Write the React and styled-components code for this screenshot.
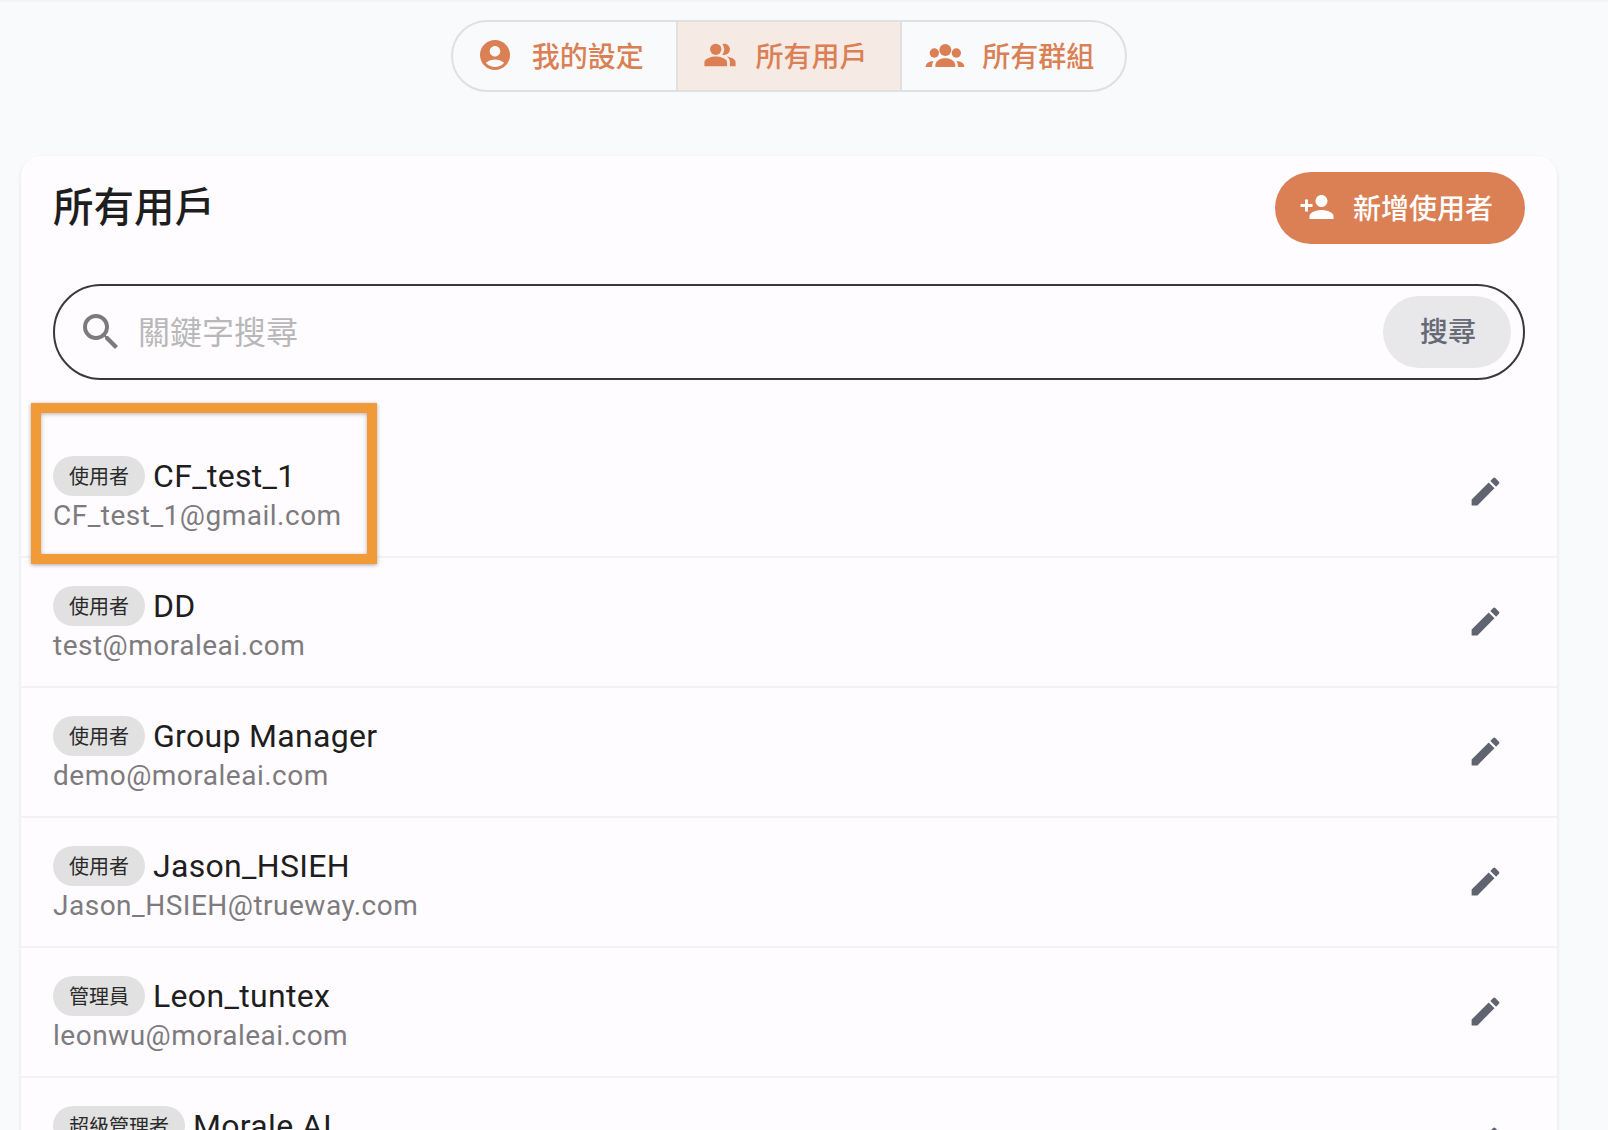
import styled, { createGlobalStyle } from "styled-components";
import { MdAccountCircle, MdPeopleAlt, MdPersonAdd, MdSearch, MdEdit } from "react-icons/md";

const GlobalStyle = createGlobalStyle`
    html, body {
        margin: 0;
        height: 100%;
        overflow: hidden;
        background: #f8fafb;
    }
    * {
        box-sizing: border-box;
    }
    body {
        font-family: Roboto, "Noto Sans CJK TC", sans-serif;
    }
`;

const Page = styled.div`
    height: 1130px;
    overflow: hidden;
    padding: 18px 51px 0 21px;
    border-top: 2px solid #f3f4f5;
`;

const TabBar = styled.div`
    display: flex;
    width: 676px;
    height: 72px;
    margin: 0 auto 64px 430px;
    border: 2px solid #dfe0e2;
    border-radius: 36px;
    overflow: hidden;
`;

const Tab = styled.button`
    flex: 1;
    display: flex;
    align-items: center;
    justify-content: center;
    gap: ${(p) => p.$gap}px;
    padding: 0 8px 2px 0;
    border: none;
    border-left: ${(p) => (p.$first ? "none" : "2px solid #dfe0e2")};
    background: ${(p) => (p.$active ? "#f6eae5" : "transparent")};
    color: #db7f54;
    font: 500 28px Roboto, "Noto Sans CJK TC", sans-serif;
`;

const Card = styled.div`
    position: relative;
    background: #fffcff;
    border-radius: 20px 20px 0 0;
    box-shadow: 0 2px 4px rgba(0, 0, 0, 0.1);
`;

const CardHead = styled.div`
    display: flex;
    align-items: flex-start;
    justify-content: space-between;
    padding: 16px 32px 0 32px;
`;

const Title = styled.h2`
    margin: 8px 0 0;
    font-size: 40.5px;
    font-weight: 500;
    line-height: 56px;
    color: #1e1e1e;
`;

const AddButton = styled.button`
    display: flex;
    align-items: center;
    gap: 18px;
    width: 250px;
    height: 72px;
    padding: 0 0 2px 24px;
    border: none;
    border-radius: 36px;
    background: #db7f54;
    color: #fff;
    font: 500 28px Roboto, "Noto Sans CJK TC", sans-serif;
`;

const SearchBar = styled.div`
    display: flex;
    align-items: center;
    height: 96px;
    margin: 40px 32px 0;
    padding: 0 12px 0 22px;
    border: 2px solid #3a383b;
    border-radius: 48px;
    color: #7b7b7b;
`;

const Placeholder = styled.span`
    flex: 1;
    margin-left: 13px;
    padding-bottom: 4px;
    font-size: 32px;
    color: #b8b8b8;
`;

const SearchButton = styled.button`
    width: 128px;
    height: 72px;
    padding: 0 0 4px 2px;
    border: none;
    border-radius: 36px;
    background: #e8e8eb;
    color: #666a75;
    font: 500 28px Roboto, "Noto Sans CJK TC", sans-serif;
`;

const List = styled.div`
    margin-top: 48px;
`;

const Row = styled.div`
    display: flex;
    align-items: center;
    justify-content: space-between;
    height: 130px;
    padding: 0 53px 0 32px;
    border-bottom: 2px solid #f3f1f3;
`;

const RowInfo = styled.div`
    display: flex;
    flex-direction: column;
    margin-top: 8px;
`;

const NameLine = styled.div`
    display: flex;
    align-items: center;
    gap: 8px;
`;

const Chip = styled.span`
    display: inline-flex;
    align-items: center;
    height: 40px;
    padding: 0 16px 2px;
    border-radius: 20px;
    background: #e2e1e2;
    color: #2a2a2a;
    font-size: 20px;
`;

const Name = styled.span`
    font-size: 32px;
    line-height: 40px;
    letter-spacing: 0.32px;
    color: #1e1e1e;
`;

const Email = styled.span`
    font-size: 28px;
    line-height: 40px;
    letter-spacing: 0.5px;
    color: #7d7b7e;
`;

const EditIcon = styled(MdEdit)`
    margin-bottom: 2px;
    color: #5f6470;
`;

const Highlight = styled.div`
    position: absolute;
    left: 10px;
    top: 247px;
    width: 346px;
    height: 161px;
    border: 10px solid #f09a38;
    box-shadow: 0 1px 4px rgba(0, 0, 0, 0.35), inset 0 1px 4px rgba(0, 0, 0, 0.3);
    pointer-events: none;
`;

function GroupsIcon() {
    return (
        <svg width="40" height="25" viewBox="26 42 120 75" fill="currentColor">
            <circle cx="87" cy="63" r="18" />
            <circle cx="54" cy="72" r="14" />
            <circle cx="120" cy="72" r="14" />
            <path d="M57 114v-4c0-14 14-22 30-22s30 8 30 22v4z" />
            <path d="M28 114c0-10 8-17 24-18-3 4-5 10-5 18z" />
            <path d="M144 114c0-10-8-17-24-18 3 4 5 10 5 18z" />
        </svg>
    );
}

const users = [
    { role: "使用者", name: "CF_test_1", email: "CF_test_1@gmail.com" },
    { role: "使用者", name: "DD", email: "test@moraleai.com" },
    { role: "使用者", name: "Group Manager", email: "demo@moraleai.com" },
    { role: "使用者", name: "Jason_HSIEH", email: "Jason_HSIEH@trueway.com" },
    { role: "管理員", name: "Leon_tuntex", email: "leonwu@moraleai.com" },
    { role: "超級管理者", name: "Morale AI", email: "admin@moraleai.com" },
];

export default function App() {
    return (
        <>
            <GlobalStyle />
            <Page>
                <TabBar>
                    <Tab $first $gap={19}><MdAccountCircle size={36} />我的設定</Tab>
                    <Tab $active $gap={19}><MdPeopleAlt size={34} />所有用戶</Tab>
                    <Tab $gap={17}><GroupsIcon />所有群組</Tab>
                </TabBar>
                <Card>
                    <CardHead>
                        <Title>所有用戶</Title>
                        <AddButton><MdPersonAdd size={36} />新增使用者</AddButton>
                    </CardHead>
                    <SearchBar>
                        <MdSearch size={48} />
                        <Placeholder>關鍵字搜尋</Placeholder>
                        <SearchButton>搜尋</SearchButton>
                    </SearchBar>
                    <List>
                        {users.map((user) => (
                            <Row key={user.email}>
                                <RowInfo>
                                    <NameLine>
                                        <Chip>{user.role}</Chip>
                                        <Name>{user.name}</Name>
                                    </NameLine>
                                    <Email>{user.email}</Email>
                                </RowInfo>
                                <EditIcon size={37} />
                            </Row>
                        ))}
                    </List>
                    <Highlight />
                </Card>
            </Page>
        </>
    );
}
